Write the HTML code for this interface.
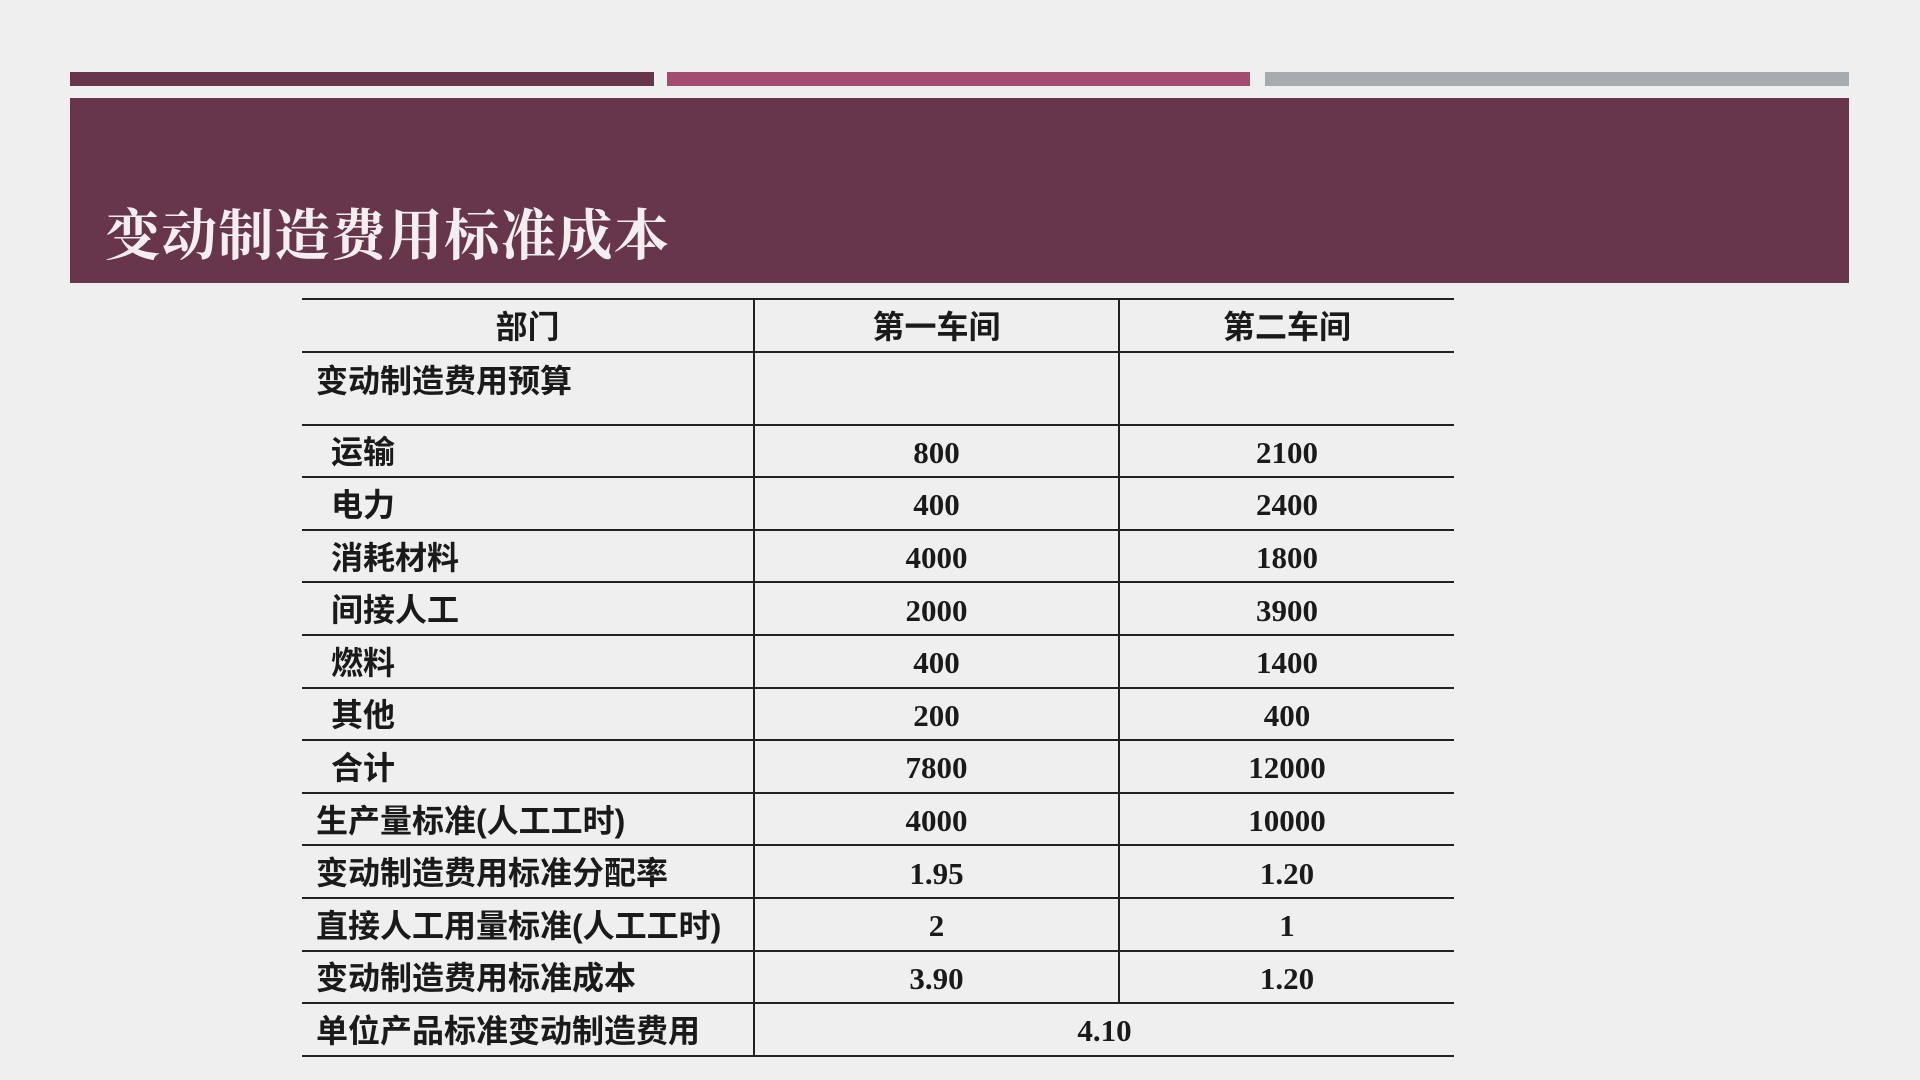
<!DOCTYPE html>
<html><head><meta charset="utf-8"><style>
body{margin:0;width:1920px;height:1080px;background:#efefef;position:relative;overflow:hidden;font-family:"Liberation Sans","Noto Sans CJK SC",sans-serif}
.bar{position:absolute;top:72px;height:14px}
.band{position:absolute;left:70px;top:98px;width:1779px;height:185px;background:#67364a}
.title{position:absolute;left:105px;top:191px;font-family:"Liberation Serif","Noto Serif CJK SC",serif;font-weight:bold;font-size:55.5px;color:#f4eef0;letter-spacing:1px}
table{position:absolute;left:302px;top:298px;width:1152px;border-collapse:collapse;font-weight:bold;color:#1a1a1a}
td{border-top:2px solid #222;border-bottom:2px solid #222;height:47.6px;padding:3px 0 0 0;font-size:32px;line-height:1}
td+td{border-left:2px solid #222}
td.n{text-align:center;font-family:"Liberation Serif",serif;font-size:31px}
td.l{padding-left:14px}
td.i{padding-left:29px}
tr.h td{text-align:center;height:47.6px}
</style></head><body>
<div class="bar" style="left:70px;width:584px;background:#67364a"></div>
<div class="bar" style="left:667px;width:583px;background:#a34c70"></div>
<div class="bar" style="left:1265px;width:584px;background:#a7abad"></div>
<div class="band"></div>
<div class="title">变动制造费用标准成本</div>
<table>
<colgroup><col style="width:452px"><col style="width:365px"><col style="width:335px"></colgroup>
<tr class="h"><td>部门</td><td>第一车间</td><td>第二车间</td></tr>
<tr><td class="l" style="height:59px;vertical-align:top;padding-top:12px">变动制造费用预算</td><td></td><td></td></tr>
<tr><td class="i">运输</td><td class="n">800</td><td class="n">2100</td></tr>
<tr><td class="i">电力</td><td class="n">400</td><td class="n">2400</td></tr>
<tr><td class="i">消耗材料</td><td class="n">4000</td><td class="n">1800</td></tr>
<tr><td class="i">间接人工</td><td class="n">2000</td><td class="n">3900</td></tr>
<tr><td class="i">燃料</td><td class="n">400</td><td class="n">1400</td></tr>
<tr><td class="i">其他</td><td class="n">200</td><td class="n">400</td></tr>
<tr><td class="i">合计</td><td class="n">7800</td><td class="n">12000</td></tr>
<tr><td class="l">生产量标准(人工工时)</td><td class="n">4000</td><td class="n">10000</td></tr>
<tr><td class="l">变动制造费用标准分配率</td><td class="n">1.95</td><td class="n">1.20</td></tr>
<tr><td class="l">直接人工用量标准(人工工时)</td><td class="n">2</td><td class="n">1</td></tr>
<tr><td class="l">变动制造费用标准成本</td><td class="n">3.90</td><td class="n">1.20</td></tr>
<tr><td class="l">单位产品标准变动制造费用</td><td class="n" colspan="2">4.10</td></tr>
</table>
</body></html>
